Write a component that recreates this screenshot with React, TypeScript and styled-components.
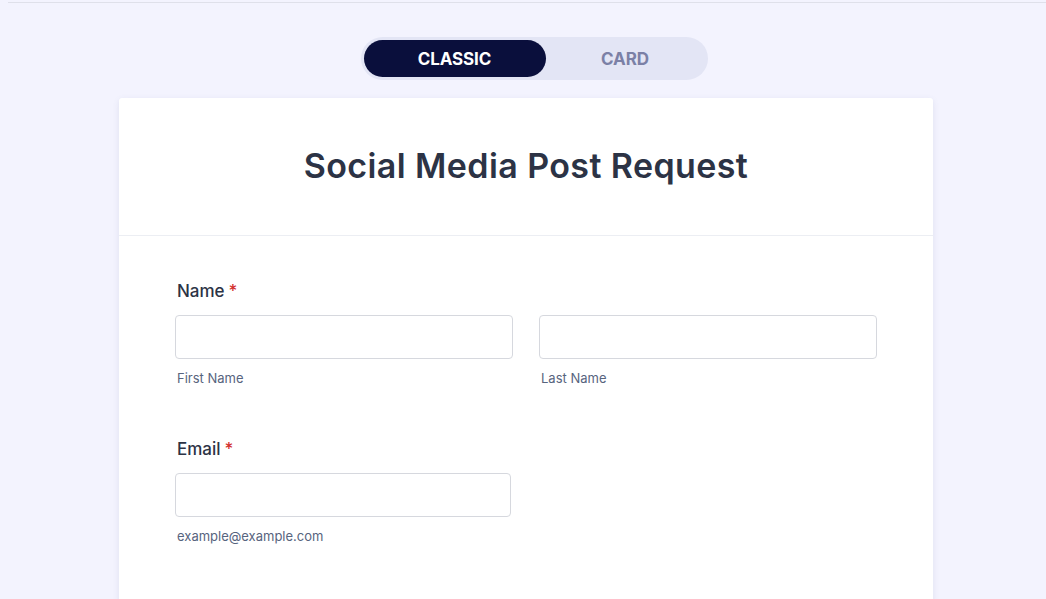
import styled, { createGlobalStyle } from 'styled-components';

const GlobalStyle = createGlobalStyle`
  html, body {
    margin: 0;
    padding: 0;
    background: #f3f3fe;
    font-family: Inter, "Noto Sans", sans-serif;
  }
`;

const Page = styled.div`
  min-height: 599px;
  padding-left: 8px;
  overflow: hidden;
`;

const TopRule = styled.div`
  height: 2px;
  border-bottom: 1px solid #dfe0ea;
  background: #f3f3fe;
`;

const Main = styled.main`
  display: flex;
  flex-direction: column;
  align-items: center;
  padding-top: 34px;
  margin-left: -8px;
`;

const Toggle = styled.div`
  display: flex;
  width: 347px;
  height: 43px;
  padding: 3px;
  margin-left: 22px;
  box-sizing: border-box;
  background: #e3e5f5;
  border-radius: 22px;
`;

const ToggleButton = styled.button<{ $active?: boolean }>`
  flex: ${({ $active }) => ($active ? '0 0 182px' : '1')};
  border: 0;
  border-radius: 19px;
  background: ${({ $active }) => ($active ? '#0a0f3c' : 'transparent')};
  color: ${({ $active }) => ($active ? '#ffffff' : '#7b80a6')};
  font-family: Inter, sans-serif;
  font-weight: 700;
  font-size: 17px;
  letter-spacing: -0.1px;
  text-transform: uppercase;
  cursor: pointer;
`;

const Card = styled.section`
  margin-top: 18px;
  width: 814px;
  background: #ffffff;
  border-radius: 3px 3px 0 0;
  box-shadow: 0 2px 6px rgba(84, 95, 150, 0.12);
  margin-left: 6px;
`;

const Header = styled.header`
  height: 138px;
  display: flex;
  align-items: center;
  justify-content: center;
  border-bottom: 1px solid #eceef3;
  box-sizing: border-box;
`;

const Title = styled.h1`
  margin: 0;
  margin-top: -2px;
  font-size: 34px;
  font-weight: 600;
  color: #2c3345;
  letter-spacing: 0.4px;
`;

const Body = styled.div`
  padding: 44px 56px 60px;
  display: flex;
  flex-direction: column;
  gap: 53px;
`;

const Field = styled.div`
  display: flex;
  flex-direction: column;
`;

const Label = styled.label`
  font-size: 17px;
  font-weight: 500;
  color: #2c3345;
  padding-left: 2px;
  margin-bottom: 13px;
  line-height: 22px;
`;

const Required = styled.span`
  color: #d3302f;
  margin-left: 4px;
`;

const Row = styled.div`
  display: grid;
  grid-template-columns: 338px 338px;
  column-gap: 26px;
`;

const InputGroup = styled.div<{ $width?: string }>`
  display: flex;
  flex-direction: column;
  width: ${({ $width }) => $width || 'auto'};
`;

const Input = styled.input`
  height: 44px;
  box-sizing: border-box;
  border: 1px solid #d6d8de;
  border-radius: 4px;
  background: #fff;
  font-family: Inter, sans-serif;
  font-size: 15px;
  padding: 0 12px;
  outline: none;
`;

const SubLabel = styled.span`
  margin-top: 12px;
  padding-left: 2px;
  font-size: 13px;
  color: #57647e;
  line-height: 14px;
`;

export default function App() {
  return (
    <>
      <GlobalStyle />
      <Page>
        <TopRule />
        <Main>
          <Toggle>
            <ToggleButton $active>Classic</ToggleButton>
            <ToggleButton>Card</ToggleButton>
          </Toggle>
          <Card>
            <Header>
              <Title>Social Media Post Request</Title>
            </Header>
            <Body>
              <Field>
                <Label>
                  Name<Required>*</Required>
                </Label>
                <Row>
                  <InputGroup>
                    <Input type="text" />
                    <SubLabel>First Name</SubLabel>
                  </InputGroup>
                  <InputGroup>
                    <Input type="text" />
                    <SubLabel>Last Name</SubLabel>
                  </InputGroup>
                </Row>
              </Field>
              <Field>
                <Label>
                  Email<Required>*</Required>
                </Label>
                <InputGroup $width="336px">
                  <Input type="email" />
                  <SubLabel>example@example.com</SubLabel>
                </InputGroup>
              </Field>
            </Body>
          </Card>
        </Main>
      </Page>
    </>
  );
}
